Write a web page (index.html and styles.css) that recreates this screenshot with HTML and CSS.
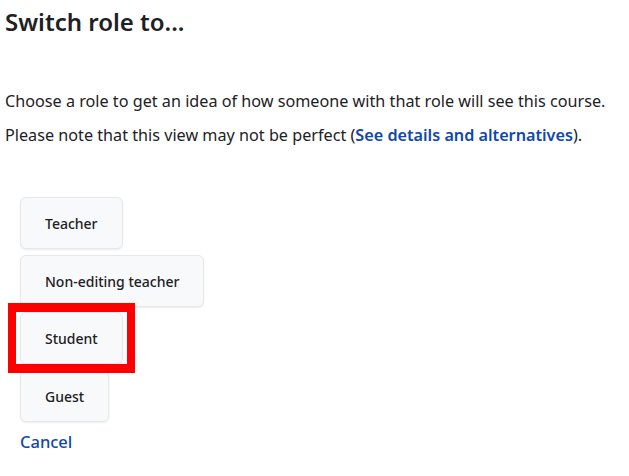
FILE: index.html
```html
<!DOCTYPE html>
<html lang="en">
<head>
    <meta charset="UTF-8">
    <meta name="viewport" content="width=device-width, initial-scale=1.0">
    <title>Switch role to...</title>
    <link rel="stylesheet" href="styles.css">
</head>
<body>
    <div class="page">
        <h2>Switch role to...</h2>
        <div class="intro">
            <p>Choose a role to get an idea of how someone with that role will see this course.</p>
            <p>Please note that this view may not be perfect (<a href="#">See details and alternatives</a>).</p>
        </div>
        <div class="roles">
            <button class="role-button">Teacher</button>
            <button class="role-button">Non-editing teacher</button>
            <div class="highlight-wrap">
                <button class="role-button">Student</button>
                <span class="highlight"></span>
            </div>
            <button class="role-button">Guest</button>
            <a href="#" class="cancel">Cancel</a>
        </div>
    </div>
</body>
</html>
```

FILE: styles.css
```css
body {
    font-family: "Noto Sans", sans-serif;
    margin: 0;
    padding: 0;
    background-color: #fff;
    color: #1d2125;
}

.page {
    padding: 0 5px;
}

h2 {
    margin: 0;
    padding-top: 6px;
    font-size: 24px;
    font-weight: 600;
    line-height: 32px;
}

.intro {
    margin-top: 52px;
}

.intro p {
    margin: 0 0 12px;
    font-size: 16.2px;
    line-height: 22px;
}

a {
    color: #0f47ad;
    text-decoration: none;
    font-weight: 600;
}

.roles {
    margin-top: 51px;
    padding-left: 15px;
    display: flex;
    flex-direction: column;
    align-items: flex-start;
    gap: 5.5px;
}

.role-button {
    font-family: "Noto Sans", sans-serif;
    font-size: 14px;
    font-weight: 500;
    line-height: 20px;
    color: #1d2125;
    padding: 16px 24px 14px;
    background-color: #f8f9fa;
    border: 1px solid #e6e8ea;
    border-radius: 6px;
    box-shadow: 0 1px 2px rgba(0, 0, 0, 0.08);
    cursor: pointer;
}

.highlight-wrap {
    position: relative;
}

.highlight {
    position: absolute;
    left: -12px;
    top: -9px;
    right: -12px;
    bottom: -9px;
    border: solid #ff0000;
    border-width: 9px 8px;
    pointer-events: none;
}

.cancel {
    font-size: 16.5px;
    font-weight: 500;
    margin-top: 3px;
}
```
